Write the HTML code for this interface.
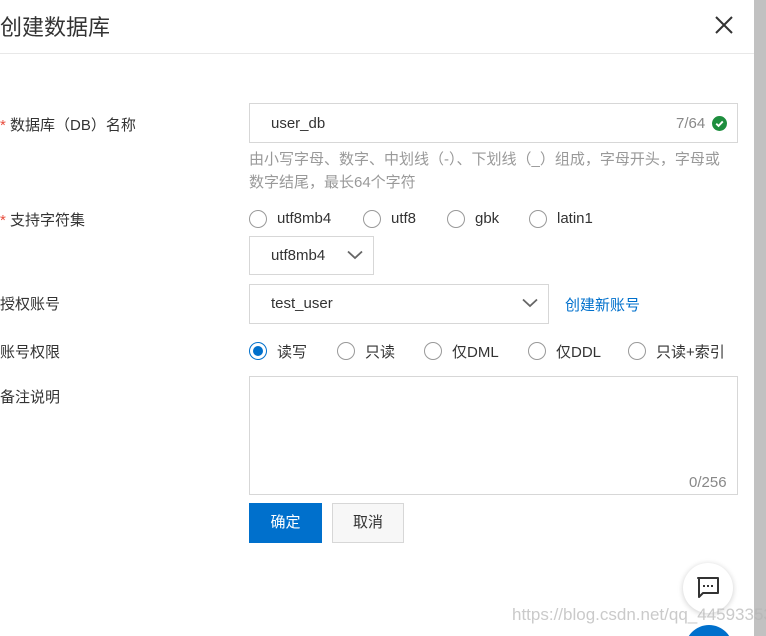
<!DOCTYPE html>
<html><head><meta charset="utf-8"><style>
*{margin:0;padding:0;box-sizing:border-box}
html,body{width:766px;height:636px;overflow:hidden}
body{background:#fff;font-family:"Liberation Sans","Noto Sans CJK SC",sans-serif;font-size:15px;color:#333}
#w{position:relative;width:766px;height:636px;overflow:hidden}
.a{position:absolute;white-space:nowrap}
.box{position:absolute;border:1px solid #d7d7d7;background:#fff}
.r{position:absolute;width:18px;height:18px;border:1px solid #999;border-radius:50%;background:#fff}
.r.on{border-color:#0070cc}
.r.on:after{content:"";position:absolute;left:3px;top:3px;width:10px;height:10px;border-radius:50%;background:#0070cc}
.lbl{position:absolute;left:0;color:#333}
.star{color:#e84c3d}
.gray{color:#999}
.l{margin-top:1px}
</style></head><body><div id="w">
<div class="a" style="left:0;top:10px;font-size:22px;color:#333">创建数据库</div>
<svg class="a" style="left:714px;top:15px" width="20" height="20" viewBox="0 0 20 20"><path d="M2 2L18 18M18 2L2 18" stroke="#333" stroke-width="2"/></svg>
<div class="a" style="left:0;top:53px;width:754px;height:1px;background:#e8e8e8"></div>
<div class="a" style="left:754px;top:0;width:12px;height:636px;background:#c1c1c1"></div>

<div class="lbl" style="top:114px"><span class="star">*</span> 数据库（DB）名称</div>
<div class="box" style="left:249px;top:103px;width:489px;height:40px"></div>
<div class="a" style="left:271px;top:115px">user_db</div>
<div class="a gray" style="left:676px;top:115px;color:#888">7/64</div>
<svg class="a" style="left:712px;top:116px" width="15" height="15" viewBox="0 0 16 16"><circle cx="8" cy="8" r="8" fill="#1e8e3e"/><path d="M4.5 8.2L7 10.6L11.5 5.8" stroke="#fff" stroke-width="2" fill="none"/></svg>
<div class="a gray" style="left:249px;top:148px;line-height:23px;font-size:15px">由小写字母、数字、中划线（-）、下划线（_）组成，字母开头，字母或<br>数字结尾，最长64个字符</div>

<div class="lbl" style="top:209px"><span class="star">*</span> 支持字符集</div>
<div class="r" style="left:249px;top:210px"></div><div class="a" style="left:277px;top:210px">utf8mb4</div>
<div class="r" style="left:363px;top:210px"></div><div class="a" style="left:391px;top:210px">utf8</div>
<div class="r" style="left:447px;top:210px"></div><div class="a" style="left:475px;top:210px">gbk</div>
<div class="r" style="left:529px;top:210px"></div><div class="a" style="left:557px;top:210px">latin1</div>
<div class="box" style="left:249px;top:236px;width:125px;height:39px"></div>
<div class="a" style="left:271px;top:247px">utf8mb4</div>
<svg class="a" style="left:347px;top:250px" width="16" height="10" viewBox="0 0 16 10"><path d="M1 1.5L8 8L15 1.5" stroke="#666" stroke-width="1.8" fill="none"/></svg>

<div class="lbl" style="top:293px">授权账号</div>
<div class="box" style="left:249px;top:284px;width:300px;height:40px"></div>
<div class="a" style="left:271px;top:295px">test_user</div>
<svg class="a" style="left:522px;top:298px" width="16" height="10" viewBox="0 0 16 10"><path d="M1 1.5L8 8L15 1.5" stroke="#666" stroke-width="1.8" fill="none"/></svg>
<div class="a" style="left:565px;top:294px;color:#0070cc">创建新账号</div>

<div class="lbl" style="top:341px">账号权限</div>
<div class="r on" style="left:249px;top:342px"></div><div class="a" style="left:277px;top:341px">读写</div>
<div class="r" style="left:337px;top:342px"></div><div class="a" style="left:365px;top:341px">只读</div>
<div class="r" style="left:424px;top:342px"></div><div class="a" style="left:452px;top:341px">仅DML</div>
<div class="r" style="left:528px;top:342px"></div><div class="a" style="left:556px;top:341px">仅DDL</div>
<div class="r" style="left:628px;top:342px"></div><div class="a" style="left:656px;top:341px">只读+索引</div>

<div class="lbl" style="top:386px">备注说明</div>
<div class="box" style="left:249px;top:376px;width:489px;height:119px"></div>
<div class="a" style="left:689px;top:474px;color:#888">0/256</div>

<div class="a" style="left:249px;top:503px;width:73px;height:40px;background:#0070cc;color:#fff;text-align:center;line-height:40px">确定</div>
<div class="a" style="left:332px;top:503px;width:72px;height:40px;background:#f7f7f7;border:1px solid #d7d7d7;text-align:center;line-height:38px">取消</div>

<div class="a" style="left:683px;top:563px;width:50px;height:50px;border-radius:50%;background:#fff;box-shadow:0 1px 6px rgba(0,0,0,.2)"></div>
<svg class="a" style="left:696px;top:576px" width="24" height="24" viewBox="0 0 24 24"><path d="M2 2H22V17H7L3 21V2Z" stroke="#333" stroke-width="2" fill="none" stroke-linejoin="round"/><rect x="7" y="9" width="2" height="2" fill="#333"/><rect x="11" y="9" width="2" height="2" fill="#333"/><rect x="15" y="9" width="2" height="2" fill="#333"/></svg>
<svg class="a" style="left:685px;top:625px" width="48" height="11" viewBox="0 0 48 11"><circle cx="24" cy="24" r="24" fill="#0070cc"/></svg>
<div class="a" style="left:512px;top:605px;font-size:17px;color:rgba(180,180,180,.7)">https://blog.csdn.net/qq_44593353</div>
</div></body></html>
